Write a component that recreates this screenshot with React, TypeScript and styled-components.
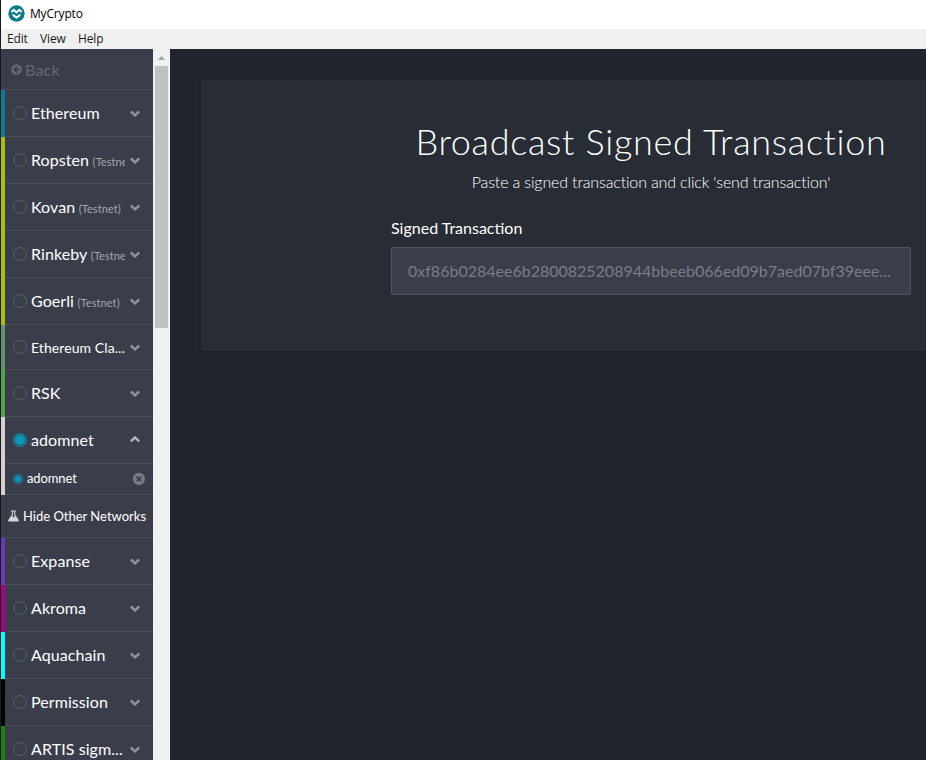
import React from "react";
import styled, { createGlobalStyle } from "styled-components";

const GlobalStyle = createGlobalStyle`
  * { box-sizing: border-box; }
  html, body { margin: 0; padding: 0; overflow: hidden; background: #20242c; }
  body { font-family: Lato, "Open Sans", sans-serif; color: #fff; }
`;

const Window = styled.div`
  width: 926px;
  height: 760px;
  display: flex;
  flex-direction: column;
  overflow: hidden;
  border-left: 1px solid #17191f;
`;

const TitleBar = styled.header`
  flex: 0 0 29px;
  display: flex;
  align-items: center;
  padding: 0 0 2px 7px;
  gap: 5px;
  background: #fff;
  color: #000;
  font: 12px/16px "Open Sans", sans-serif;
  letter-spacing: -0.17px;
`;

const MenuBar = styled.nav`
  flex: 0 0 20px;
  display: flex;
  align-items: center;
  padding-left: 6px;
  background: #f0f0f0;
  color: #1a1a1a;
  font: 12px/20px "Open Sans", sans-serif;
`;

const MenuItem = styled.span<{ $width: number }>`
  width: ${(p) => p.$width}px;
  letter-spacing: -0.15px;
`;

const Body = styled.div`
  flex: 1;
  min-height: 0;
  display: flex;
`;

const Sidebar = styled.aside`
  flex: 0 0 152px;
  overflow: hidden;
  background: #3a3e4b;
`;

const BackButton = styled.div`
  height: 41px;
  display: flex;
  align-items: center;
  gap: 3px;
  padding: 1px 0 0 10px;
  border-bottom: 1px solid #4a4e5a;
  color: #646872;
  font-size: 16px;
  line-height: 20px;
  letter-spacing: 0.2px;
`;

const Group = styled.div<{ $color: string }>`
  border-left: 4px solid ${(p) => p.$color};
`;

const NetworkRow = styled.div<{ $height: number }>`
  height: ${(p) => p.$height}px;
  display: flex;
  align-items: center;
  padding: 0 12px 0 8px;
  border-bottom: 1px solid #4a4e5a;
`;

const Radio = styled.span<{ $active?: boolean; $size: number }>`
  flex: none;
  width: ${(p) => p.$size}px;
  height: ${(p) => p.$size}px;
  border-radius: 50%;
  border: 1px solid ${(p) => (p.$active ? "#1285a3" : "#5a5e69")};
  background: ${(p) => (p.$active ? "#0a94b6" : "transparent")};
  box-shadow: ${(p) => (p.$active ? "inset 0 0 0 1px #2b5366" : "none")};
`;

const NetworkName = styled.span<{ $size: number; $lowered: boolean }>`
  flex: 0 0 94px;
  margin: 0 5px 0 4px;
  padding-top: ${(p) => (p.$lowered ? 1 : 0)}px;
  overflow: hidden;
  white-space: nowrap;
  font-size: ${(p) => p.$size}px;
  line-height: 24px;
  letter-spacing: 0.08px;
`;

const Testnet = styled.small`
  margin-left: 3.5px;
  font-size: 11px;
  color: #a4a6ad;
`;

const NodeRow = styled.div`
  height: 31px;
  display: flex;
  align-items: center;
  padding: 0 8px 1px 8px;
  border-bottom: 1px solid #4a4e5a;
  font-size: 13px;
  letter-spacing: -0.12px;
`;

const NodeName = styled.span`
  flex: 1;
  margin-left: 4px;
  padding-bottom: 2px;
`;

const ToggleNetworks = styled.div`
  height: 43px;
  display: flex;
  align-items: center;
  gap: 4px;
  padding-left: 7px;
  border-bottom: 1px solid #4a4e5a;
  font-size: 13px;
  white-space: nowrap;
`;

const Scrollbar = styled.div`
  flex: 0 0 17px;
  display: flex;
  flex-direction: column;
  align-items: center;
  background: #f0f0f0;
`;

const ScrollArrow = styled.div`
  height: 17px;
  display: flex;
  align-items: center;
`;

const Thumb = styled.div`
  width: 13px;
  height: 262px;
  background: #c1c1c1;
`;

const Main = styled.main`
  flex: 1;
  padding: 31px 0 0 31px;
  overflow: hidden;
  background: #20242c;
`;

const Panel = styled.section`
  width: 900px;
  height: 271px;
  padding: 38px 0 0;
  display: flex;
  flex-direction: column;
  align-items: center;
  background: #282c34;
  box-shadow: 0 1px 3px rgba(0, 0, 0, 0.25);
`;

const Heading = styled.h1`
  margin: 0;
  font-size: 36px;
  line-height: 46px;
  font-weight: 300;
  letter-spacing: 0.7px;
  white-space: nowrap;
`;

const Description = styled.p`
  margin: 8px 0 0;
  font-size: 16px;
  line-height: 20px;
  font-weight: 300;
  letter-spacing: -0.15px;
  font-variant-ligatures: none;
  white-space: nowrap;
`;

const Field = styled.label`
  width: 520px;
  margin-top: 26px;
  display: flex;
  flex-direction: column;
  font-size: 16px;
  line-height: 20px;
`;

const Input = styled.input`
  height: 48px;
  margin-top: 9px;
  padding: 0 16px 2px;
  border: 1px solid #53565f;
  border-radius: 2px;
  background: #3a3e4b;
  color: #fff;
  font: 16px Lato, sans-serif;
  outline: none;
  &::placeholder { color: #7a7d85; opacity: 1; }
`;

const Logo = () => (
  <svg width="17" height="17" viewBox="0 0 17 17">
    <circle cx="8.5" cy="8.5" r="8.2" fill="#087c8a" />
    <path d="M3.3 7.1 5.8 4.8 8.5 7.4l2.7-2.6 2.5 2.3" fill="none" stroke="#fff" strokeWidth="2" />
    <path d="M4 9.7 5.4 9l3.1 2.3L11.6 9l1.4.7-1.7 2.2-2.8 1.8-2.8-1.8Z" fill="#fff" />
  </svg>
);

const BackIcon = () => (
  <svg width="11" height="11" viewBox="0 0 11 11">
    <circle cx="5.5" cy="5.5" r="5.3" fill="#646872" />
    <path d="M6.2 2.5 3.2 5.5l3 3M3.2 5.5h5.5" fill="none" stroke="#3a3e4b" strokeWidth="1.7" />
  </svg>
);

const Chevron = ({ up = false }: { up?: boolean }) => (
  <svg width="10" height="8" viewBox="0 0 10 8">
    <path
      d={up ? "M.8 5.3 5 1.4l4.2 3.9" : "M.8 2.5 5 6.4l4.2-3.9"}
      fill="none"
      stroke={up ? "#b4b6bc" : "#8f929b"}
      strokeWidth="2.4"
    />
  </svg>
);

const RemoveIcon = () => (
  <svg width="13" height="13" viewBox="0 0 13 13">
    <circle cx="6.9" cy="6.9" r="6.1" fill="#777a83" />
    <path d="m4.6 4.6 4.6 4.6m0-4.6L4.6 9.2" stroke="#3a3e4b" strokeWidth="1.7" />
  </svg>
);

const Flask = () => (
  <svg width="11" height="12" viewBox="0 0 11 12">
    <path d="M3 .5h5v1H7.2v3.2L10.7 10c.5.8.1 1.5-.8 1.5H1.1c-.9 0-1.3-.7-.8-1.5l3.5-5.3V1.5H3Z" fill="#d3d4d7" />
    <path d="M4.9 1.5h1.2v3.6l1 1.6H3.9l1-1.6Z" fill="#3a3e4b" />
  </svg>
);

type NetworkData = {
  name: string;
  color: string;
  testnet?: string;
  height?: number;
  size?: number;
  node?: string;
};

const mainNetworks: NetworkData[] = [
  { name: "Ethereum", color: "#087d92" },
  { name: "Ropsten", color: "#adc101", testnet: "(Testnet)" },
  { name: "Kovan", color: "#adc101", testnet: "(Testnet)" },
  { name: "Rinkeby", color: "#adc101", testnet: "(Testnet)" },
  { name: "Goerli", color: "#adc101", testnet: "(Testnet)" },
  { name: "Ethereum Cla...", color: "#669073", height: 45, size: 14 },
  { name: "RSK", color: "#58a052" },
  { name: "adomnet", color: "#d5d1d3", node: "adomnet" },
];

const otherNetworks: NetworkData[] = [
  { name: "Expanse", color: "#673ab7" },
  { name: "Akroma", color: "#aa0087" },
  { name: "Aquachain", color: "#00ffff" },
  { name: "Permission", color: "#000000" },
  { name: "ARTIS sigm...", color: "#238006" },
];

const Network = ({ name, color, testnet, height = 47, size = 16, node }: NetworkData) => (
  <Group $color={color}>
    <NetworkRow $height={height}>
      <Radio $size={14} $active={!!node} />
      <NetworkName $size={size} $lowered={!!testnet || size === 14}>
        {name}
        {testnet && <Testnet>{testnet}</Testnet>}
      </NetworkName>
      <Chevron up={!!node} />
    </NetworkRow>
    {node && (
      <NodeRow>
        <Radio $size={10} $active />
        <NodeName>{node}</NodeName>
        <RemoveIcon />
      </NodeRow>
    )}
  </Group>
);

export default function App() {
  return (
    <>
      <GlobalStyle />
      <Window>
        <TitleBar>
          <Logo />
          MyCrypto
        </TitleBar>
        <MenuBar>
          <MenuItem $width={33}>Edit</MenuItem>
          <MenuItem $width={38}>View</MenuItem>
          <MenuItem $width={30}>Help</MenuItem>
        </MenuBar>
        <Body>
          <Sidebar>
            <BackButton>
              <BackIcon />
              Back
            </BackButton>
            {mainNetworks.map((n) => <Network key={n.name} {...n} />)}
            <ToggleNetworks>
              <Flask />
              Hide Other Networks
            </ToggleNetworks>
            {otherNetworks.map((n) => <Network key={n.name} {...n} />)}
          </Sidebar>
          <Scrollbar>
            <ScrollArrow>
              <svg width="7" height="4" viewBox="0 0 7 4"><path d="M0 4 3.5 0 7 4Z" fill="#a0a0a0" /></svg>
            </ScrollArrow>
            <Thumb />
          </Scrollbar>
          <Main>
            <Panel>
              <Heading>Broadcast Signed Transaction</Heading>
              <Description>Paste a signed transaction and click 'send transaction'</Description>
              <Field>
                Signed Transaction
                <Input placeholder="0xf86b0284ee6b2800825208944bbeeb066ed09b7aed07bf39eee..." />
              </Field>
            </Panel>
          </Main>
        </Body>
      </Window>
    </>
  );
}
